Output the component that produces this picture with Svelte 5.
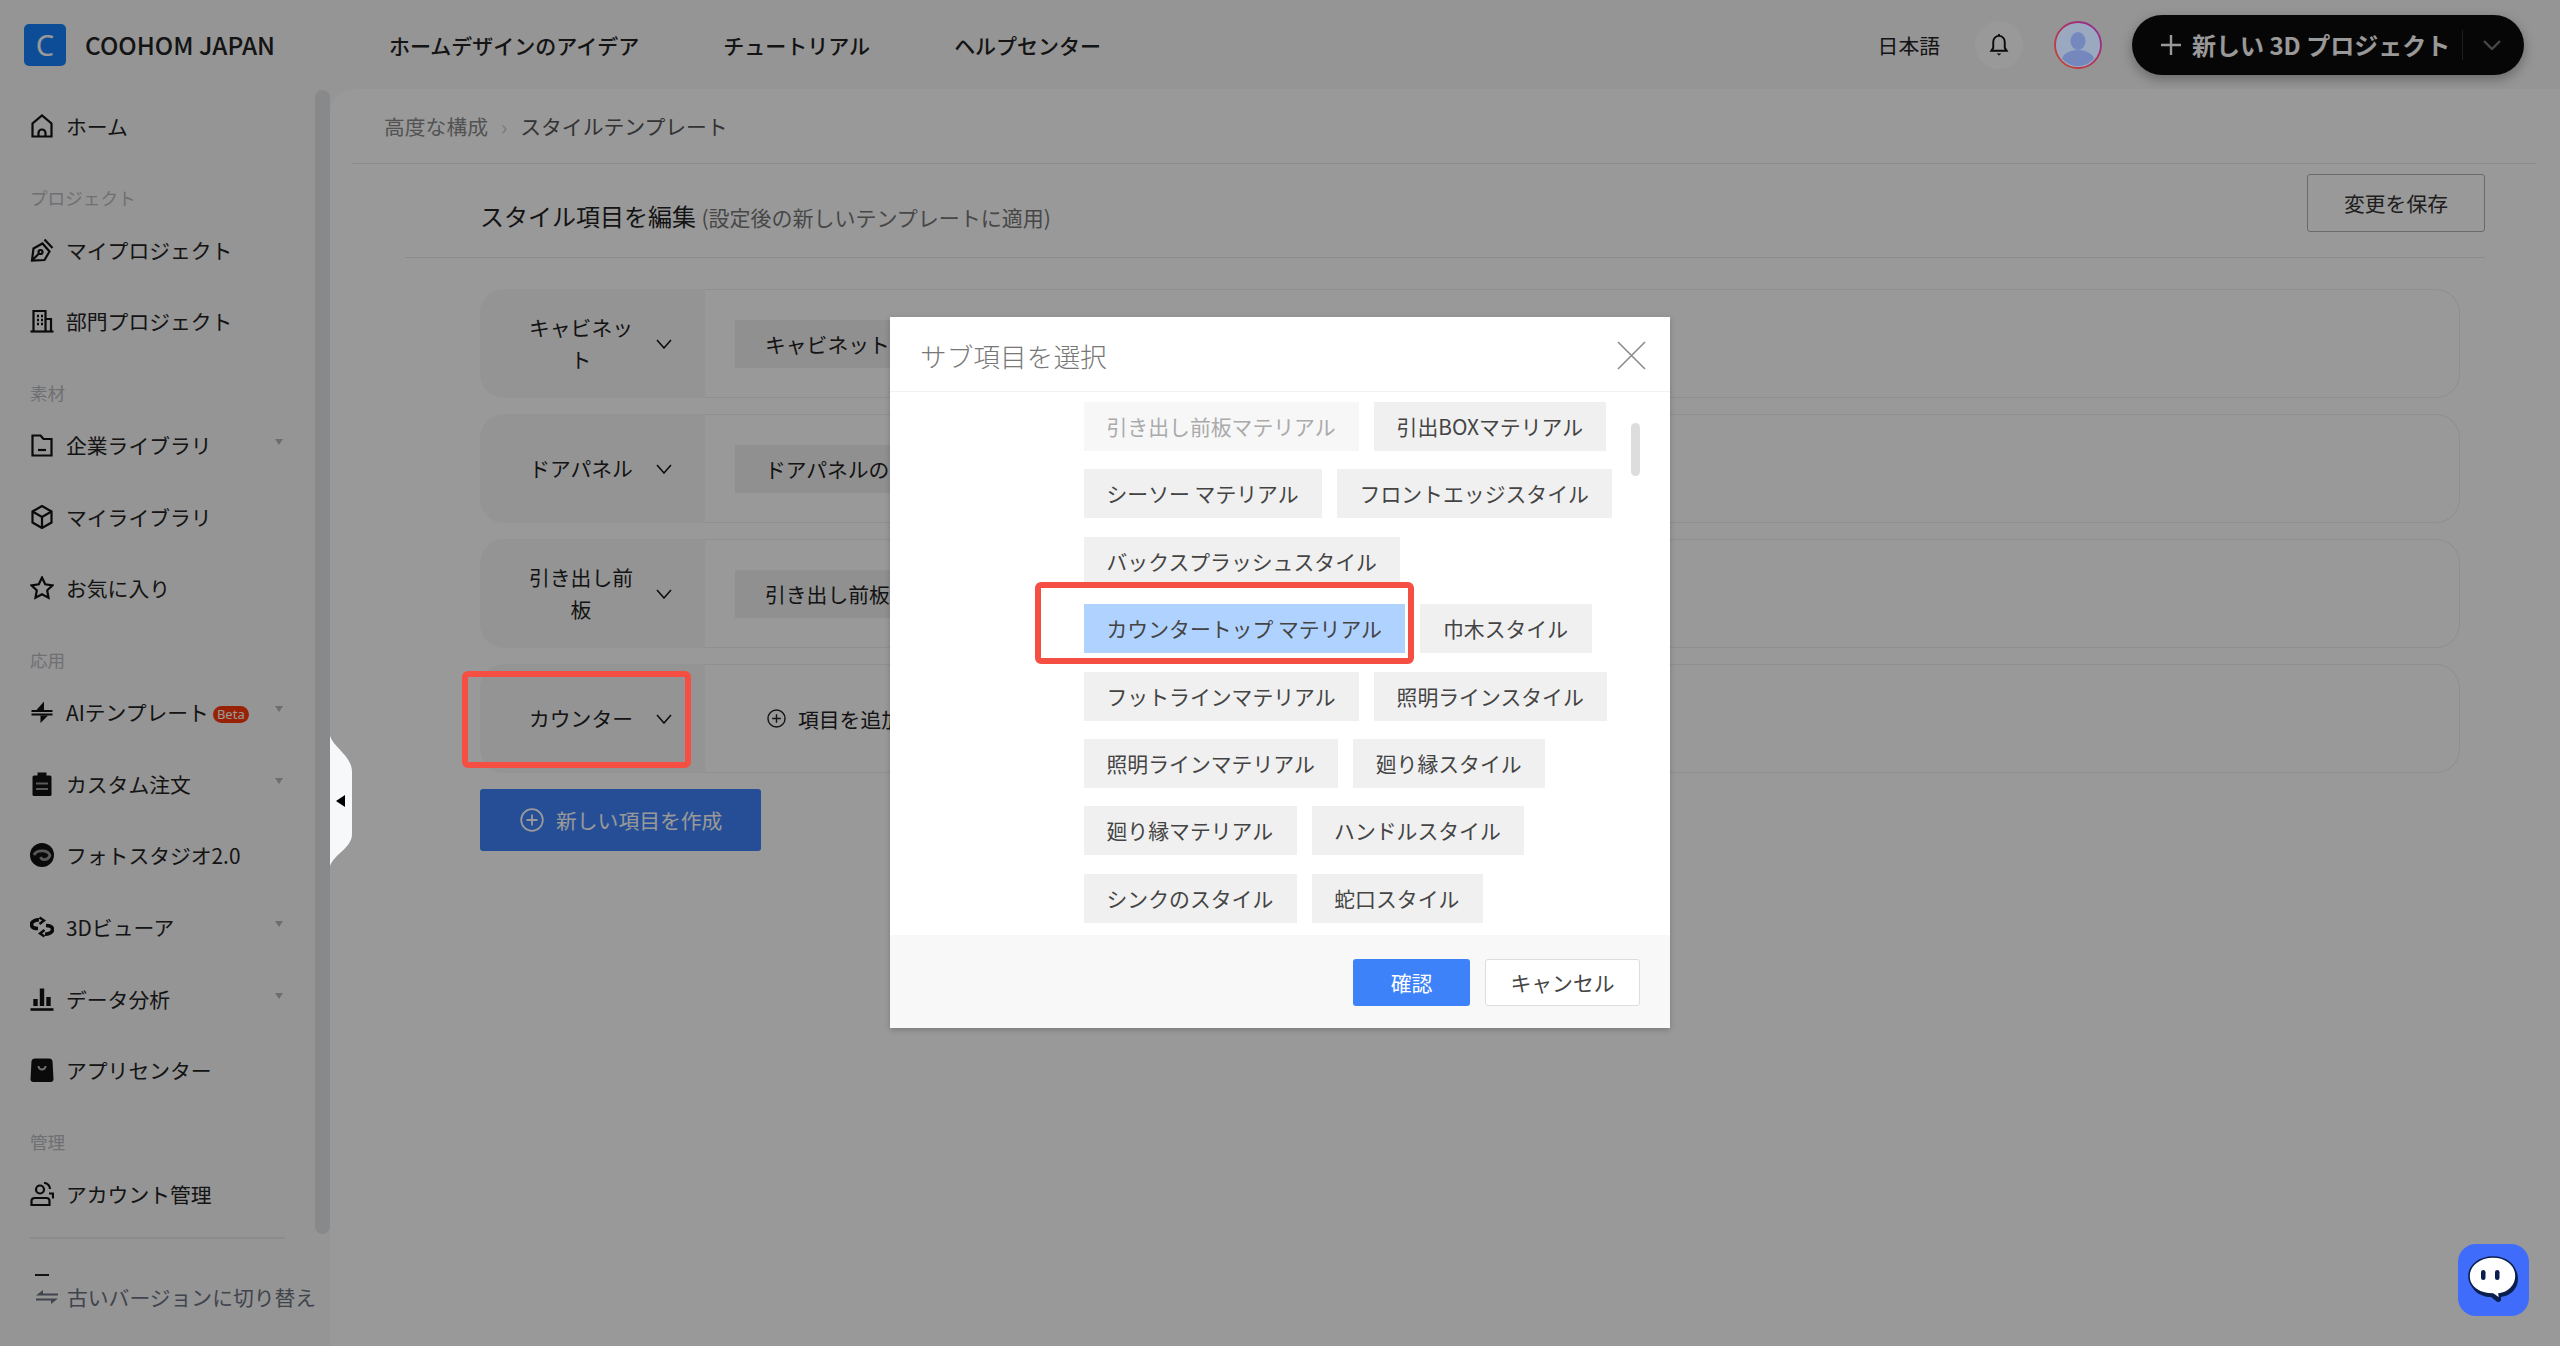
<script>
const topNav = ['ホームデザインのアイデア', 'チュートリアル', 'ヘルプセンター']

const sideGroups = [
  { items: [{ icon: 'home', name: 'ホーム' }] },
  { label: 'プロジェクト', items: [{ icon: 'pen', name: 'マイプロジェクト' }, { icon: 'building', name: '部門プロジェクト' }] },
  { label: '素材', items: [{ icon: 'folder', name: '企業ライブラリ', more: true }, { icon: 'cube', name: 'マイライブラリ' }, { icon: 'star', name: 'お気に入り' }] },
  { label: '応用', items: [
    { icon: 'ai', name: 'AIテンプレート', beta: true, more: true },
    { icon: 'order', name: 'カスタム注文', more: true },
    { icon: 'photo', name: 'フォトスタジオ2.0' },
    { icon: 'viewer', name: '3Dビューア', more: true },
    { icon: 'chart', name: 'データ分析', more: true },
    { icon: 'bag', name: 'アプリセンター' }
  ] },
  { label: '管理', items: [{ icon: 'account', name: 'アカウント管理' }] }
]

const rows = [
  { name: 'キャビネット', chip: 'キャビネット' },
  { name: 'ドアパネル', chip: 'ドアパネルの' },
  { name: '引き出し前板', chip: '引き出し前板' },
  { name: 'カウンター' }
]

const subItems = [
  { name: '引き出し前板マテリアル', off: true },
  { name: '引出BOXマテリアル' },
  { name: 'シーソー マテリアル' },
  { name: 'フロントエッジスタイル' },
  { name: 'バックスプラッシュスタイル' },
  { name: 'カウンタートップ マテリアル', on: true },
  { name: '巾木スタイル' },
  { name: 'フットラインマテリアル' },
  { name: '照明ラインスタイル' },
  { name: '照明ラインマテリアル' },
  { name: '廻り縁スタイル' },
  { name: '廻り縁マテリアル' },
  { name: 'ハンドルスタイル' },
  { name: 'シンクのスタイル' },
  { name: '蛇口スタイル' }
]
</script>

{#snippet sideIcon(name)}
  <svg class="side-icon" viewBox="0 0 24 24" fill="none" stroke="#111" stroke-width="2.2">
    {#if name === 'home'}
      <path d="M2.500 22.500V9.500L12 1.500l9.500 8v13Z" /><path d="M8.500 22.500V19a3.500 3.500 0 0 1 7 0v3.500" />
    {:else if name === 'pen'}
      <path d="M2 22.500 3.500 10.500 12.500 5.500l7 8-5 8.500Z" /><path d="M14.500 1.500 22.500 10" /><path d="M2 22.500l6.500-6.500" /><circle cx="10.500" cy="14" r="2" />
    {:else if name === 'building'}
      <path d="M3.500 22V2h12v20" /><path d="M15.500 10h5.500v12" /><path d="M0.500 22.500h23" />
      <path d="M7 7h2M11 7h2M7 11h2M11 11h2M7 15h2M11 15h2" stroke-width="2.500" />
    {:else if name === 'folder'}
      <path d="M2.500 22.500V2.500h8l3 3.500h8v16.500Z" /><path d="M8 17h8" />
    {:else if name === 'cube'}
      <path d="M12 1 21.500 6.500v11L12 23l-9.500-5.500v-11Z" /><path d="M2.500 6.500 12 12l9.500-5.500M12 12v11" />
    {:else if name === 'star'}
      <path d="M12 1.500l3.200 6.800 7.300 1-5.300 5 1.300 7.400L12 18.200l-6.500 3.500 1.300-7.400-5.300-5 7.300-1Z" />
    {:else if name === 'ai'}
      <path d="M14 1.500v8.500H6.500Z" fill="#111" stroke="none" /><path d="M10.500 23v-7.500H18Z" fill="#111" stroke="none" /><path d="M1.500 11h21M1.500 14.500h21" stroke-width="2" />
    {:else if name === 'order'}
      <rect x="2.500" y="3.500" width="19" height="20.500" rx="1.500" fill="#111" stroke="none" /><rect x="7.500" y="0.500" width="9" height="5" fill="#111" stroke="none" />
      <path d="M6 11.500h12M6 17h12" stroke="#949494" stroke-width="2.200" />
    {:else if name === 'photo'}
      <circle cx="12" cy="12" r="12" fill="#111" stroke="none" />
      <path d="M4 12C6.500 7 17.500 6 20 12.500c-2 5-8 5.500-9.500 1.500" stroke="#949494" stroke-width="2.800" />
    {:else if name === 'viewer'}
      <path d="M9 5C5 4.500 1 7 1.500 10c.3 2 3 3.500 6.500 3.500" stroke-width="3.600" /><path d="M15 19c4 .5 8-2 7.500-5-.3-2-3-3.500-6.500-3.500" stroke-width="3.600" /><path d="M9.500 2.500l4.500 3-4.500 3.500M14.500 15l-4.500 3.500 4.500 3" stroke-width="2.400" />
    {:else if name === 'chart'}
      <path d="M0.500 22.500h23" stroke-width="2.600" /><path d="M5.500 19v-7M12 19V1.500M18.500 19v-9" stroke-width="4.400" />
    {:else if name === 'bag'}
      <path d="M4.500 0.500h15a3 3 0 0 1 3 2.500l1 18a3 3 0 0 1-3 3H3.500a3 3 0 0 1-3-3l1-18A3 3 0 0 1 4.500 0.500Z" fill="#111" stroke="none" />
      <path d="M8.500 8a3.500 3.500 0 0 0 7 0" stroke="#bbb" stroke-width="2" />
    {:else if name === 'account'}
      <circle cx="10" cy="7.500" r="4" /><path d="M1.500 23v-4a3 3 0 0 1 3-3h12a3 3 0 0 1 3 3v4Z" /><path d="M14 1a6 6 0 0 1 6 6M19 11.500h4v5" />
    {/if}
  </svg>
{/snippet}

{#snippet plusCircle(size)}
  <svg viewBox="0 0 24 24" width={size} height={size} fill="none" stroke="currentColor" stroke-width="1.800">
    <circle cx="12" cy="12" r="10.800" /><path d="M12 6.500v11M6.500 12h11" />
  </svg>
{/snippet}

<div class="shell">
  <header class="topbar">
    <div class="brand">
      <span class="logo">C</span>
      <span class="brand-name">COOHOM JAPAN</span>
    </div>
    <nav class="top-nav">
      {#each topNav as link}
        <span>{link}</span>
      {/each}
    </nav>
    <div class="top-right">
      <span class="lang">日本語</span>
      <span class="bell">
        <svg viewBox="0 0 20 24" width="20" height="23" fill="none" stroke="#111" stroke-width="2">
          <path d="M2 18.500h16l-2-3V9a6 6 0 0 0-12 0v6.500Z" /><path d="M10 1v2" /><path d="M7.500 21.500h5l-2.500 2Z" fill="#111" stroke="none" />
        </svg>
      </span>
      <svg class="avatar" viewBox="0 0 48 48" width="48" height="48">
        <defs>
          <linearGradient id="ring" x1="0" y1="1" x2="1" y2="0">
            <stop offset="0" stop-color="#c9472a" /><stop offset="0.55" stop-color="#b03060" /><stop offset="1" stop-color="#8a2f9e" />
          </linearGradient>
          <clipPath id="face"><circle cx="24" cy="24" r="21" /></clipPath>
        </defs>
        <circle cx="24" cy="24" r="23" fill="#9aa8c0" stroke="url(#ring)" stroke-width="1.800" />
        <g clip-path="url(#face)" fill="#7488bd">
          <ellipse cx="24" cy="20" rx="7.500" ry="9" />
          <ellipse cx="24" cy="39" rx="16" ry="10" />
        </g>
      </svg>
      <div class="new-project">
        <svg viewBox="0 0 20 20" width="20" height="20" stroke="currentColor" stroke-width="2.400"><path d="M10 0v20M0 10h20" /></svg>
        <span class="new-label">新しい 3D プロジェクト</span>
        <span class="new-sep"></span>
        <svg class="new-caret" viewBox="0 0 18 10" width="18" height="10" fill="none" stroke="currentColor" stroke-width="2.400"><path d="M1 1l8 8 8-8" /></svg>
      </div>
    </div>
  </header>

  <aside class="sidebar">
    <div class="side-nav">
      {#each sideGroups as group}
        {#if group.label}
          <div class="side-label">{group.label}</div>
        {/if}
        {#each group.items as item}
          <div class="side-item">
            {@render sideIcon(item.icon)}
            <span>{item.name}</span>
            {#if item.beta}<span class="beta">Beta</span>{/if}
            {#if item.more}<i class="more"></i>{/if}
          </div>
        {/each}
      {/each}
    </div>
    <div class="side-foot">
      <i class="foot-dash"></i>
      <div class="old-version">
        <svg viewBox="0 0 22 16" width="22" height="16" fill="#6b7280"><path d="M0 6.500 7 1v3.500h15v2ZM22 9.500 15 15v-3.500H0v-2Z" /></svg>
        <span>古いバージョンに切り替え</span>
      </div>
    </div>
    <i class="side-scroll"></i>
  </aside>

  <main class="panel">
    <div class="crumbs">
      <span class="crumb-a">高度な構成</span>
      <span class="crumb-sep">›</span>
      <span class="crumb-b">スタイルテンプレート</span>
    </div>
    <div class="title-row">
      <h1>スタイル項目を編集 <small>(設定後の新しいテンプレートに適用)</small></h1>
      <button class="save">変更を保存</button>
    </div>
    <div class="rows">
      {#each rows as row}
        <div class="row">
          <div class="row-head">
            <span class="row-name">{row.name}</span>
            <svg viewBox="0 0 16 10" width="16" height="10" fill="none" stroke="#111" stroke-width="1.500"><path d="M1 1l7 8 7-8" /></svg>
          </div>
          <div class="row-body">
            {#if row.chip}
              <span class="row-chip">{row.chip}</span>
            {:else}
              <span class="add-item">{@render plusCircle(19)}項目を追加</span>
            {/if}
          </div>
        </div>
      {/each}
      <button class="create">{@render plusCircle(24)}<span>新しい項目を作成</span></button>
    </div>
  </main>
</div>

<div class="mask"></div>

<svg class="collapse" viewBox="0 0 22 130" width="22" height="130">
  <path d="M0 0C4 12 22 20 22 36V98C22 112 4 118 0 130Z" fill="#f7f8fa" />
  <path d="M6 65 15 59V71Z" fill="#000" />
</svg>

<section class="dialog">
  <header class="dialog-head">
    <h2>サブ項目を選択</h2>
    <svg viewBox="0 0 29 29" width="29" height="29" stroke="#8c8c8c" stroke-width="1.600"><path d="M1 1l27 27M28 1 1 28" /></svg>
  </header>
  <div class="dialog-body">
    <div class="sub-list">
      {#each subItems as sub}
        <span class="sub-chip" class:off={sub.off} class:on={sub.on}>{sub.name}</span>
      {/each}
    </div>
    <i class="sub-scroll"></i>
  </div>
  <footer class="dialog-foot">
    <button class="ok">確認</button>
    <button class="cancel">キャンセル</button>
  </footer>
</section>

<i class="note note-row"></i>
<i class="note note-chip"></i>

<div class="chat">
  <svg viewBox="0 0 54 50" width="54" height="50">
    <path d="M27 4C41 4 51 12 51 24c0 10-8 17-17 18l0 2c0 3-3 4-5 2l-5-4C12 42 3 34 3 24 3 12 13 4 27 4Z" fill="#0b1f4f" />
    <path d="M26 2C39 2 49 10 49 21c0 10-8 17-17 18l1 5-7-5C12 39 2 32 2 21 2 10 13 2 26 2Z" fill="#fff" stroke="#0b1f4f" stroke-width="1.600" />
    <rect x="14" y="15" width="4.500" height="10" rx="2.250" fill="#0b1f4f" />
    <rect x="28" y="15" width="4.500" height="10" rx="2.250" fill="#0b1f4f" />
  </svg>
</div>

<style>
:global(body) {
  margin: 0;
  background: #fff;
}
.shell {
  display: grid;
  grid-template-columns: 330px 1fr;
  grid-template-rows: 89px 1fr;
  width: 2560px;
  height: 1346px;
  overflow: hidden;
  background: #f8f8f8;
  font-family: "Noto Sans CJK JP", "Noto Sans", sans-serif;
  font-size: 20.8px;
  color: #222;
}
.topbar {
  grid-column: 1 / 3;
  display: flex;
  align-items: center;
  padding: 0 36px 0 24px;
}
.brand {
  display: flex;
  align-items: center;
  width: 365px;
}
.logo {
  width: 42px;
  height: 42px;
  border-radius: 5px;
  background: #167ffa;
  color: #fff;
  font-size: 29px;
  line-height: 42px;
  text-align: center;
  font-family: "Noto Sans", sans-serif;
}
.brand-name {
  margin-left: 19px;
  font-size: 24.400px;
  font-weight: 500;
}
.top-nav {
  display: flex;
  gap: 84px;
  font-size: 21px;
  font-weight: 500;
}
.top-right {
  margin-left: auto;
  display: flex;
  align-items: center;
}
.lang {
  margin-right: 35px;
}
.bell {
  display: flex;
  align-items: center;
  justify-content: center;
  width: 48px;
  height: 48px;
  border-radius: 50%;
  background: #fff;
  margin-right: 31px;
}
.avatar {
  position: relative;
  z-index: 1;
  margin-right: 30px;
}
.new-project {
  display: flex;
  align-items: center;
  width: 392px;
  height: 60px;
  box-sizing: border-box;
  padding-left: 29px;
  border-radius: 30px;
  background: #0b0b0b;
  color: #fff;
  box-shadow: 0 4px 12px rgba(0, 0, 0, 0.3);
}
.new-label {
  margin-left: 11px;
  width: 270px;
  font-size: 24px;
  font-weight: 700;
  white-space: nowrap;
}
.new-sep {
  width: 1px;
  height: 30px;
  background: #333;
}
.new-caret {
  margin-left: 20px;
  color: #777;
}
.sidebar {
  position: relative;
  display: flex;
  flex-direction: column;
}
.side-nav {
  padding: 1px 47px 0 30px;
}
.side-item {
  display: flex;
  align-items: center;
  height: 71.700px;
}
.side-icon {
  width: 24px;
  height: 24px;
  margin-right: 12px;
  flex: none;
}
.side-label {
  margin-top: 20px;
  height: 32px;
  line-height: 32px;
  font-size: 17.600px;
  color: #b9bbbf;
}
.beta {
  margin-left: 4px;
  padding: 0 4px;
  height: 17px;
  line-height: 17px;
  margin-top: 5px;
  border-radius: 9px;
  background: #ff3a0a;
  color: #fff;
  font-size: 13px;
  font-family: "Noto Sans", sans-serif;
}
.more {
  margin-left: auto;
  margin-bottom: 6px;
  border-left: 4px solid transparent;
  border-right: 4px solid transparent;
  border-top: 6px solid #b8b8b8;
}
.side-foot {
  margin: 7px 45px 0 30px;
  border-top: 2px solid #eaeaea;
  position: relative;
}
.foot-dash {
  display: block;
  width: 14px;
  height: 2px;
  margin: 35px 0 0 5px;
  background: #222;
}
.old-version {
  display: flex;
  align-items: center;
  margin: 3px 0 0 6px;
  gap: 9px;
  color: #6b7280;
  white-space: nowrap;
  height: 36px;
}
.old-version svg {
  flex: none;
}
.side-scroll {
  position: absolute;
  left: 315px;
  top: 1px;
  width: 15px;
  height: 1144px;
  border-radius: 8px;
  background: #e3e4e6;
}
.panel {
  background: #fff;
  border-top-left-radius: 24px;
  min-width: 0;
}
.crumbs {
  display: flex;
  align-items: center;
  height: 75px;
  margin: 0 24px 0 22px;
  padding-left: 32px;
  border-bottom: 1px solid #eaeaea;
  box-sizing: border-box;
}
.crumb-a {
  color: #8a8a8a;
}
.crumb-sep {
  margin: 0 13px;
  color: #ccc;
}
.crumb-b {
  color: #555;
}
.title-row {
  display: flex;
  align-items: center;
  justify-content: space-between;
  height: 94px;
  margin: 0 75px 0 75px;
  padding-left: 75px;
  border-bottom: 1px solid #eaeaea;
  box-sizing: border-box;
}
h1 {
  margin: 9px 0 0;
  font-size: 24px;
  font-weight: 400;
  color: #222;
}
small {
  font-size: 21px;
  font-weight: 400;
  color: #777;
}
.save {
  width: 178px;
  height: 58px;
  margin-bottom: 15px;
  border: 1px solid #b0b0b0;
  border-radius: 3px;
  background: #fff;
  color: #333;
  font: inherit;
}
.rows {
  padding: 31px 100px 0 150px;
}
.row {
  display: flex;
  height: 109px;
  margin-bottom: 16px;
}
.row-head {
  display: flex;
  align-items: center;
  width: 225px;
  flex: none;
  box-sizing: border-box;
  padding-left: 45px;
  background: #f7f7f7;
  border-radius: 24px 0 0 24px;
}
.row-name {
  width: 112px;
  line-height: 32px;
  text-align: center;
  margin: 0 19px 2px 0;
}
.row-body {
  flex: 1;
  display: flex;
  align-items: center;
  padding-left: 30px;
  border: 1px solid #eee;
  border-left: 0;
  border-radius: 0 24px 24px 0;
}
.row-chip {
  min-width: 210px;
  height: 48px;
  line-height: 48px;
  padding: 0 30px;
  background: #f0f0f0;
}
.add-item {
  display: flex;
  align-items: center;
  gap: 12px;
  margin-left: 32px;
  white-space: nowrap;
}
.create {
  display: flex;
  align-items: center;
  gap: 12px;
  width: 281px;
  height: 62px;
  padding: 0 0 0 40px;
  border: 0;
  border-radius: 3px;
  background: #3f82fa;
  color: #fff;
  font: inherit;
}
.mask {
  position: absolute;
  left: 0;
  top: 0;
  width: 2560px;
  height: 1346px;
  background: rgba(0, 0, 0, 0.4);
}
.collapse {
  position: absolute;
  left: 330px;
  top: 736px;
}
.dialog {
  position: absolute;
  left: 890px;
  top: 317px;
  width: 780px;
  height: 711px;
  display: flex;
  flex-direction: column;
  background: #fff;
  box-shadow: 0 2px 6px rgba(0, 0, 0, 0.2);
  font-family: "Noto Sans CJK JP", "Noto Sans", sans-serif;
  font-size: 20.850px;
  color: #444;
}
.dialog-head {
  display: flex;
  align-items: center;
  justify-content: space-between;
  height: 75px;
  flex: none;
  padding: 2px 24px 0 30px;
  border-bottom: 1px solid #f2f2f2;
  box-sizing: border-box;
}
h2 {
  margin: 0;
  font-size: 26.700px;
  font-weight: 300;
  color: #777;
}
.dialog-body {
  position: relative;
  flex: 1;
  min-height: 0;
  overflow: hidden;
}
.sub-list {
  display: flex;
  flex-wrap: wrap;
  gap: 18.400px 15px;
  width: 546px;
  padding: 10px 0 0 194px;
}
.sub-chip {
  height: 49px;
  line-height: 48px;
  padding: 0 23.500px 0 22.500px;
  background: #f0f0f0;
  white-space: nowrap;
}
.sub-chip.off {
  background: #f7f7f7;
  color: #aaa;
}
.sub-chip.on {
  background: #b0d2ff;
}
.sub-scroll {
  position: absolute;
  left: 741px;
  top: 31px;
  width: 9px;
  height: 53px;
  border-radius: 5px;
  background: #ddd;
}
.dialog-foot {
  display: flex;
  justify-content: flex-end;
  align-items: center;
  gap: 15px;
  height: 93px;
  flex: none;
  padding: 1px 30px 0 0;
  box-sizing: border-box;
  background: #f8f8f8;
}
.dialog-foot button {
  height: 47px;
  border-radius: 3px;
  font: inherit;
}
.ok {
  width: 117px;
  border: 0;
  background: #3e82f9;
  color: #fff;
}
.cancel {
  width: 155px;
  border: 1px solid #ddd;
  background: #fff;
  color: #444;
}
.note {
  position: absolute;
  box-sizing: border-box;
  border: 6px solid #f44f42;
  border-radius: 6px;
}
.note-row {
  left: 462px;
  top: 671px;
  width: 229px;
  height: 97px;
}
.note-chip {
  left: 1035px;
  top: 582px;
  width: 379px;
  height: 82px;
}
.chat {
  position: absolute;
  left: 2458px;
  top: 1244px;
  width: 71px;
  height: 72px;
  display: flex;
  align-items: center;
  justify-content: center;
  border-radius: 18px;
  background: #3f6cfb;
}
</style>
